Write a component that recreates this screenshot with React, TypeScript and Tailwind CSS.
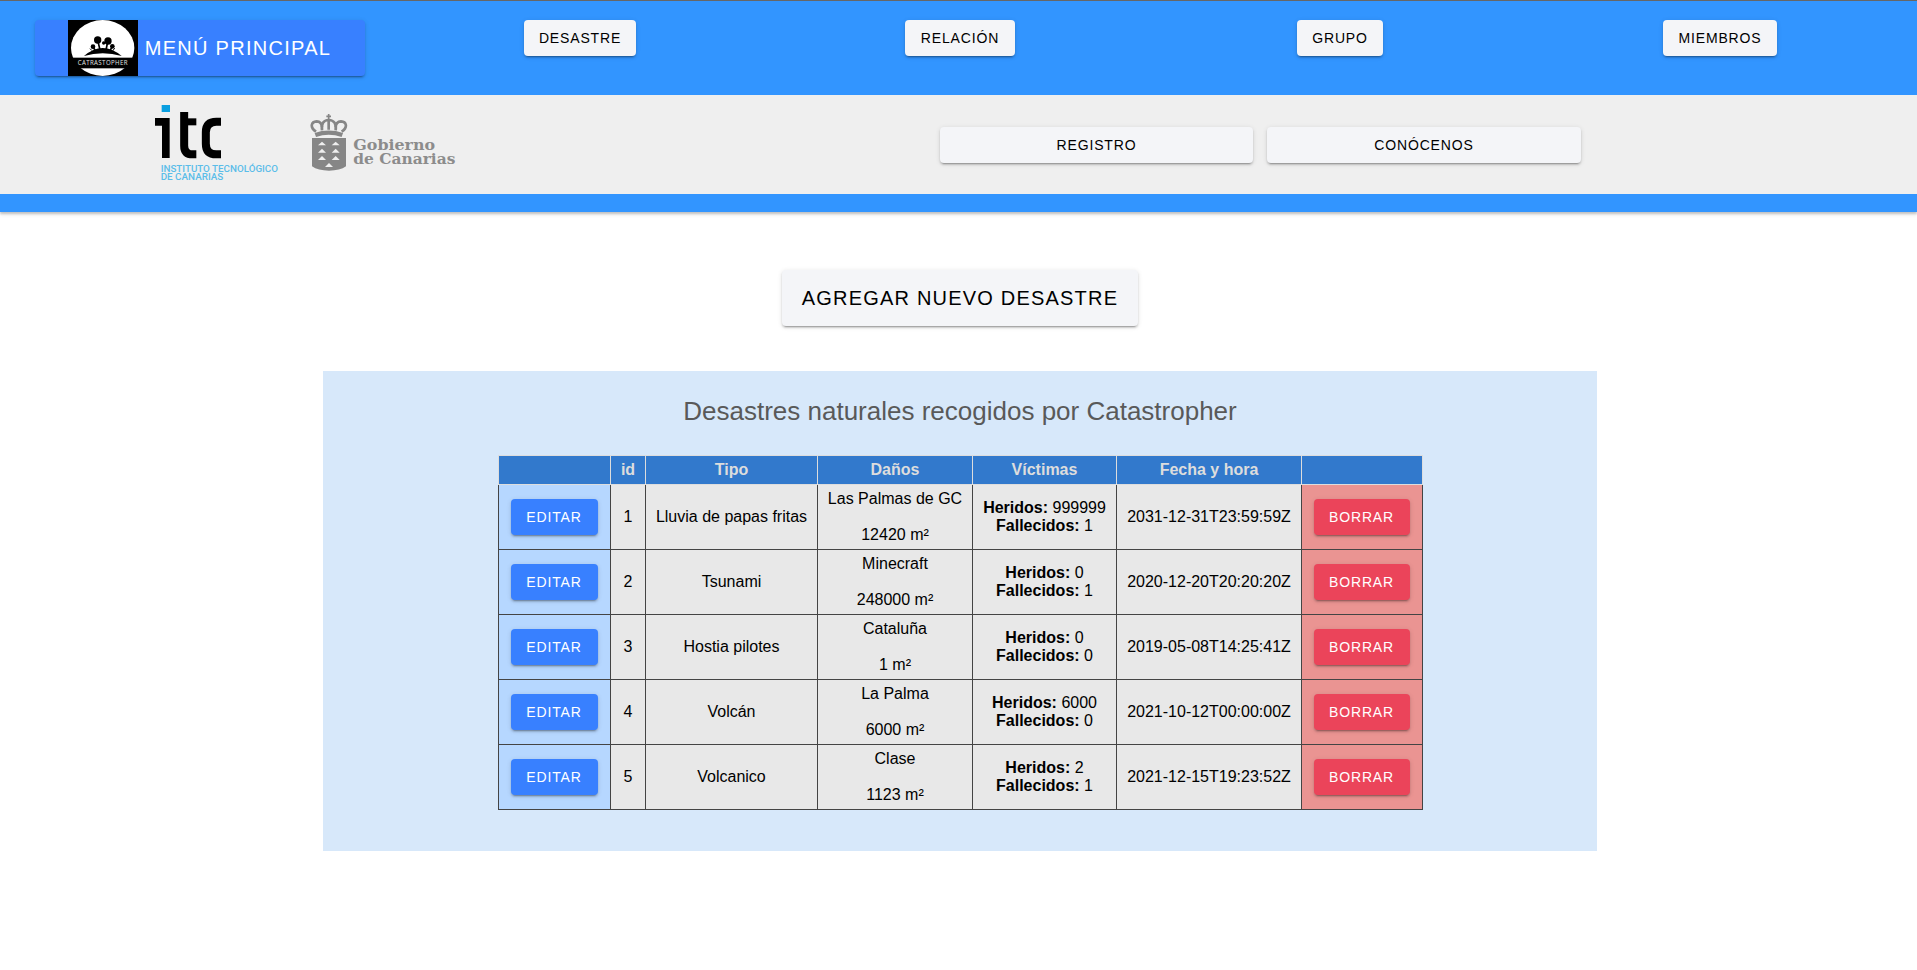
import type { ReactNode } from "react";

const SHADOW =
  "shadow-[0_3px_1px_-2px_rgba(0,0,0,0.2),0_2px_2px_0_rgba(0,0,0,0.14),0_1px_5px_0_rgba(0,0,0,0.12)]";

const TONES = {
  light: "bg-[#f4f5f8] text-black",
  primary: "bg-[#3880ff] text-white",
  danger: "bg-[#eb445a] text-white",
};

function Button({
  children,
  tone = "light",
  className = "",
}: {
  children: ReactNode;
  tone?: keyof typeof TONES;
  className?: string;
}) {
  return (
    <button
      className={`h-9 rounded px-[15.4px] text-[14px] tracking-[0.84px] uppercase whitespace-nowrap ${SHADOW} ${TONES[tone]} ${className}`}
    >
      {children}
    </button>
  );
}

function CatastropherLogo() {
  return (
    <svg className="block h-14 w-[70px] shrink-0" viewBox="0 0 210 168">
      <rect width="210" height="168" fill="#000" />
      <ellipse cx="104" cy="84" rx="95" ry="84" fill="#fff" />
      <g fill="#000">
        <circle cx="89" cy="60" r="11" />
        <circle cx="120" cy="63" r="11" />
        <circle cx="107" cy="69" r="5" />
        <circle cx="75" cy="80" r="7" />
        <circle cx="133" cy="79" r="7" />
        <path d="M48 108Q104 60 161 108Q104 92 48 108Z" />
        <rect y="113" width="210" height="32" />
      </g>
      <path d="M90 64L96 90M119 66L114 90M75 82L84 94M133 80L125 93" stroke="#000" strokeWidth="5" />
      <path d="M66 86L72 92M140 84L135 92" stroke="#000" strokeWidth="3" />
      <text
        x="29"
        y="136"
        fill="#e4e4e4"
        fontFamily="Open Sans, sans-serif"
        fontSize="19"
        textLength="151"
        lengthAdjust="spacingAndGlyphs"
      >
        CATRASTOPHER
      </text>
    </svg>
  );
}

function ItcLogo() {
  return (
    <svg className="block h-[78px] w-[124px] shrink-0" viewBox="45 30 372 234">
      <rect x="65" y="30" width="25" height="21" fill="#0a9fe0" />
      <g fill="none" stroke="#000">
        <path d="M45 80.5H77.5V189" strokeWidth="23" />
        <path d="M132.500 51V152Q132.500 178 158 178H169" strokeWidth="24" />
        <path d="M140 80.500H169" strokeWidth="21" />
        <path d="M243 80.500H229Q197.500 80.500 197.500 112V146Q197.500 178 229 178H243" strokeWidth="24" />
      </g>
      <g fill="#5bbde9" fontFamily="Roboto, sans-serif" fontSize="25" fontWeight="500">
        <text x="62" y="230" textLength="352" lengthAdjust="spacingAndGlyphs">
          INSTITUTO TECNOLÓGICO
        </text>
        <text x="62" y="255" textLength="188" lengthAdjust="spacingAndGlyphs">
          DE CANARIAS
        </text>
      </g>
    </svg>
  );
}

function GobiernoLogo() {
  return (
    <svg className="block h-[60px] w-[146px] shrink-0" viewBox="30 24 438 180">
      <g fill="none" stroke="#868686">
        <path d="M86 27V42M79 34H93" strokeWidth="5" />
        <path
          d="M48 80C28 66 34 50 50 49Q65 50 66 66M125 80C145 66 139 50 123 49Q108 50 107 66"
          strokeWidth="8"
        />
        <path d="M66 76Q62 46 86 45Q111 46 107 76M86 46V74" strokeWidth="8" />
        <path d="M46 90Q86 76 127 90" strokeWidth="13" />
      </g>
      <path d="M36 99H138V184Q120 197 87 197Q54 197 36 184Z" fill="#868686" />
      <path
        d="M54 121L66 110L78 121ZM95 121L107 110L119 121ZM54 143L66 131L78 143ZM95 143L107 131L119 143ZM54 165L66 153L78 165ZM95 165L107 153L119 165ZM75 186L87 174L99 186Z"
        fill="#efefef"
      />
      <g fill="#8c8c8c" fontFamily="DejaVu Serif, serif" fontSize="43" fontWeight="700">
        <text x="160" y="134" textLength="245" lengthAdjust="spacingAndGlyphs">
          Gobierno
        </text>
        <text x="160" y="177" textLength="306" lengthAdjust="spacingAndGlyphs">
          de Canarias
        </text>
      </g>
    </svg>
  );
}

const NAV = ["Desastre", "Relación", "Grupo", "Miembros"];

const ROWS = [
  { id: 1, type: "Lluvia de papas fritas", place: "Las Palmas de GC", area: 12420, hurt: 999999, dead: 1, date: "2031-12-31T23:59:59Z" },
  { id: 2, type: "Tsunami", place: "Minecraft", area: 248000, hurt: 0, dead: 1, date: "2020-12-20T20:20:20Z" },
  { id: 3, type: "Hostia pilotes", place: "Cataluña", area: 1, hurt: 0, dead: 0, date: "2019-05-08T14:25:41Z" },
  { id: 4, type: "Volcán", place: "La Palma", area: 6000, hurt: 6000, dead: 0, date: "2021-10-12T00:00:00Z" },
  { id: 5, type: "Volcanico", place: "Clase", area: 1123, hurt: 2, dead: 1, date: "2021-12-15T19:23:52Z" },
];

const HEADINGS = ["", "id", "Tipo", "Daños", "Víctimas", "Fecha y hora", ""];

export default function App() {
  return (
    <div className="min-h-[970px] bg-white font-['Liberation_Sans',Arial,sans-serif] text-black">
      <header className="border-t border-[#666] bg-[#3295ff] shadow-[0_2px_2px_0_rgba(0,0,0,0.18),0_3px_4px_0_rgba(0,0,0,0.08)]">
        <nav className="grid h-[94px] grid-cols-5 items-start justify-items-center pt-[19px] pr-[7px] pl-[10px]">
          <button
            className={`flex h-14 w-[330px] items-center justify-center gap-[7px] rounded bg-[#3880ff] pr-px text-[20px] font-normal tracking-[1.27px] text-white ${SHADOW}`}
          >
            <CatastropherLogo />
            MENÚ PRINCIPAL
          </button>
          {NAV.map((label) => (
            <Button key={label}>{label}</Button>
          ))}
        </nav>
        <div className="flex h-[99px] items-start bg-[#efefef] pl-[155px]">
          <div className="pt-[10px]">
            <ItcLogo />
          </div>
          <div className="ml-[31px] pt-[18px]">
            <GobiernoLogo />
          </div>
          <div className="ml-[484px] flex gap-[14px] pt-8">
            <Button className="w-[313px]">Registro</Button>
            <Button className="w-[314px]">Conócenos</Button>
          </div>
        </div>
        <div className="h-[18px]" />
      </header>

      <main className="flex flex-col items-center pt-[58px] pl-[3px]">
        <button
          className={`h-14 rounded bg-[#f4f5f8] px-5 text-[20px] tracking-[1.2px] whitespace-nowrap ${SHADOW}`}
        >
          AGREGAR NUEVO DESASTRE
        </button>

        <section className="mt-[45px] flex h-[480px] w-[1274px] flex-col items-center bg-[#d7e8fa]">
          <h1 className="mt-[24px] text-[26px] leading-8 text-[#595959]">
            Desastres naturales recogidos por Catastropher
          </h1>
          <table className="mt-[28px] w-[925px] table-fixed border-collapse text-center text-[16px] leading-[18px]">
            <colgroup>
              <col className="w-[112px]" />
              <col className="w-[35px]" />
              <col className="w-[172px]" />
              <col className="w-[155px]" />
              <col className="w-[144px]" />
              <col className="w-[185px]" />
              <col className="w-[121px]" />
            </colgroup>
            <thead>
              <tr className="h-[29px] bg-[#3279cc] text-[#dddddd]">
                {HEADINGS.map((heading, i) => (
                  <th key={i} className="border border-[#dddddd] p-0 pl-px font-bold">
                    {heading}
                  </th>
                ))}
              </tr>
            </thead>
            <tbody>
              {ROWS.map((row) => (
                <tr key={row.id} className="h-[65px] bg-[#e8e8e8] *:border *:border-[#444] *:p-0 *:pl-px">
                  <td className="bg-[#b6d7ff]">
                    <Button tone="primary" className="w-[87px] pl-[14.4px]">
                      Editar
                    </Button>
                  </td>
                  <td>{row.id}</td>
                  <td>{row.type}</td>
                  <td>
                    <p>{row.place}</p>
                    <p className="mt-[18px]">{row.area} m²</p>
                  </td>
                  <td>
                    <p>
                      <b>Heridos:</b> {row.hurt}
                    </p>
                    <p>
                      <b>Fallecidos:</b> {row.dead}
                    </p>
                  </td>
                  <td>{row.date}</td>
                  <td className="bg-[#ea9492]">
                    <Button tone="danger" className="w-24 pl-[14.4px]">
                      Borrar
                    </Button>
                  </td>
                </tr>
              ))}
            </tbody>
          </table>
        </section>
      </main>
    </div>
  );
}
